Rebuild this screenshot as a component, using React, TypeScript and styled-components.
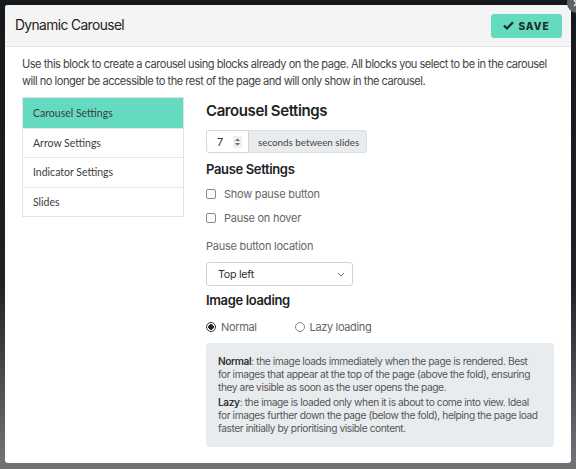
import React from "react";
import styled, { createGlobalStyle } from "styled-components";

const GlobalStyle = createGlobalStyle`
  html, body {
    margin: 0;
    padding: 0;
    background: #3b3e43;
    font-family: Inter, "Noto Sans", sans-serif;
    overflow: hidden;
  }
  * { box-sizing: border-box; }
`;

const tabs = ["Carousel Settings", "Arrow Settings", "Indicator Settings", "Slides"];

const App = () => {
  return (
    <>
      <GlobalStyle />
      <Backdrop>
        <Modal>
          <Header>
            <Title>Dynamic Carousel</Title>
            <SaveButton>
              <svg width="11" height="9" viewBox="0 0 11 9">
                <path d="M1 4.6 L4 7.4 L10 1.2" stroke="#1f2b2a" strokeWidth="2.2" fill="none" />
              </svg>
              SAVE
            </SaveButton>
          </Header>
          <Body>
            <Intro>
              Use this block to create a carousel using blocks already on the page. All blocks you select to be in the carousel
              <br />
              will no longer be accessible to the rest of the page and will only show in the carousel.
            </Intro>
            <Columns>
              <Sidebar>
                {tabs.map((t, i) => (
                  <Tab key={t} $active={i === 0}>
                    {t}
                  </Tab>
                ))}
              </Sidebar>
              <Content>
                <MainHeading>Carousel Settings</MainHeading>
                <InputGroup>
                  <NumberBox>
                    7
                    <Spinner>
                      <svg width="7" height="10" viewBox="0 0 7 10">
                        <path d="M1 4 L3.5 1.5 L6 4 Z M1 6 L3.5 8.5 L6 6 Z" fill="#666" />
                      </svg>
                    </Spinner>
                  </NumberBox>
                  <Addon>seconds between slides</Addon>
                </InputGroup>
                <SubHeading $top={8}>Pause Settings</SubHeading>
                <CheckRow>
                  <CheckBox />
                  Show pause button
                </CheckRow>
                <CheckRow>
                  <CheckBox />
                  Pause on hover
                </CheckRow>
                <FieldLabel>Pause button location</FieldLabel>
                <Select>
                  Top left
                  <svg width="8" height="5" viewBox="0 0 8 5">
                    <path d="M1 1 L4 4 L7 1" stroke="#777" strokeWidth="1" fill="none" />
                  </svg>
                </Select>
                <SubHeading $top={6}>Image loading</SubHeading>
                <RadioRow>
                  <RadioOption $gap={38}>
                    <Radio $checked />
                    Normal
                  </RadioOption>
                  <RadioOption>
                    <Radio />
                    Lazy loading
                  </RadioOption>
                </RadioRow>
                <InfoBox>
                  <InfoPara>
                    <b>Normal</b>: the image loads immediately when the page is rendered. Best
                    <br />
                    for images that appear at the top of the page (above the fold), ensuring
                    <br />
                    they are visible as soon as the user opens the page.
                  </InfoPara>
                  <InfoPara>
                    <b>Lazy</b>: the image is loaded only when it is about to come into view. Ideal
                    <br />
                    for images further down the page (below the fold), helping the page load
                    <br />
                    faster initially by prioritising visible content.
                  </InfoPara>
                </InfoBox>
              </Content>
            </Columns>
          </Body>
          <CloseButton>
            <svg width="8" height="8" viewBox="0 0 8 8">
              <path d="M1 1 L7 7 M7 1 L1 7" stroke="#e4e4e4" strokeWidth="1.6" />
            </svg>
          </CloseButton>
        </Modal>
      </Backdrop>
    </>
  );
};

export default App;

const Backdrop = styled.div`
  width: 576px;
  height: 469px;
  padding: 5px 4px 6px 5px;
  background: linear-gradient(#15181c 0%, #1d2024 60%, #6e7176 98%);
`;

const Modal = styled.div`
  position: relative;
  width: 566px;
  height: 458px;
  background: #fff;
  border-radius: 3px;
  display: flex;
  flex-direction: column;
`;

const Header = styled.div`
  flex-shrink: 0;
  height: 42px;
  background: #f4f4f4;
  border-bottom: 1px solid #e4e4e4;
  display: flex;
  align-items: center;
  justify-content: space-between;
  padding: 0 9px 0 10px;
  border-radius: 3px 3px 0 0;
`;

const Title = styled.div`
  font-size: 13.8px;
  color: #222;
  letter-spacing: -0.6px;
  margin-top: -1px;
`;

const SaveButton = styled.div`
  width: 71px;
  height: 24px;
  background: #62dbbf;
  border-radius: 3px;
  display: flex;
  align-items: center;
  justify-content: center;
  gap: 4px;
  font-size: 10px;
  font-weight: 800;
  letter-spacing: 1px;
  color: #1f2b2a;
`;

const Body = styled.div`
  padding: 9px 11px 0 17px;
`;

const Intro = styled.p`
  margin: 0;
  font-size: 11.1px;
  line-height: 17px;
  color: #444;
  letter-spacing: -0.5px;
  white-space: nowrap;
`;

const Columns = styled.div`
  display: flex;
  gap: 22px;
  margin-top: 7px;
`;

const Sidebar = styled.div`
  flex-shrink: 0;
  width: 162px;
  align-self: flex-start;
  border: 1px solid #e3e3e3;
`;

const Tab = styled.div<{ $active?: boolean }>`
  height: 29.5px;
  display: flex;
  align-items: center;
  padding-left: 10px;
  font-family: Lato, sans-serif;
  font-size: 10.5px;
  color: #3d3d3d;
  background: ${(p) => (p.$active ? "#64dbc1" : "#fff")};
  border-top: ${(p) => (p.$active ? "none" : "1px solid #e6e6e6")};
`;

const Content = styled.div`
  flex: 1;
  min-width: 0;
  padding-right: 11px;
`;

const MainHeading = styled.div`
  font-size: 15px;
  font-weight: 600;
  color: #222;
  margin-top: 4px;
  line-height: 20px;
  letter-spacing: -0.4px;
`;

const InputGroup = styled.div`
  display: flex;
  height: 23px;
  margin-top: 9px;
`;

const NumberBox = styled.div`
  width: 43px;
  border: 1px solid #d6d6d6;
  border-radius: 3px 0 0 3px;
  display: flex;
  align-items: center;
  justify-content: space-between;
  padding: 0 6px 0 10px;
  font-size: 11px;
  color: #333;
`;

const Spinner = styled.span`
  display: flex;
  width: 9px;
  height: 12px;
  background: #efefef;
  align-items: center;
  justify-content: center;
`;

const Addon = styled.div`
  width: 118px;
  background: #e9ecef;
  border: 1px solid #dde0e3;
  border-left: none;
  border-radius: 0 3px 3px 0;
  display: flex;
  align-items: center;
  padding-left: 9px;
  font-family: Lato, sans-serif;
  font-size: 9.8px;
  color: #444;
  white-space: nowrap;
`;

const SubHeading = styled.div<{ $top: number }>`
  font-size: 13px;
  font-weight: 600;
  color: #222;
  margin-top: ${(p) => p.$top}px;
  line-height: 17px;
  letter-spacing: -0.35px;
`;

const CheckRow = styled.div`
  display: flex;
  align-items: center;
  gap: 8px;
  font-size: 11px;
  letter-spacing: -0.25px;
  color: #666;
  height: 16px;
  margin-top: 8px;
`;

const CheckBox = styled.span`
  width: 10px;
  height: 10px;
  border: 1px solid #8a8a8a;
  border-radius: 2px;
`;

const FieldLabel = styled.div`
  font-size: 11px;
  letter-spacing: -0.25px;
  color: #666;
  margin-top: 13px;
  line-height: 14px;
`;

const Select = styled.div`
  width: 147px;
  height: 24px;
  border: 1px solid #d2d2d2;
  border-radius: 3px;
  margin-top: 9px;
  display: flex;
  align-items: center;
  justify-content: space-between;
  padding: 0 7px 0 11px;
  font-size: 10.8px;
  letter-spacing: -0.3px;
  color: #333;
`;

const RadioRow = styled.div`
  display: flex;
  margin-top: 10px;
  height: 16px;
`;

const RadioOption = styled.div<{ $gap?: number }>`
  display: flex;
  align-items: center;
  gap: 5px;
  font-size: 11px;
  letter-spacing: -0.35px;
  color: #666;
  margin-right: ${(p) => p.$gap ?? 0}px;
`;

const Radio = styled.span<{ $checked?: boolean }>`
  width: 10px;
  height: 10px;
  border-radius: 50%;
  border: 1px solid ${(p) => (p.$checked ? "#333" : "#888")};
  background: ${(p) => (p.$checked ? "radial-gradient(circle, #222 0 2.5px, #fff 3px)" : "#fff")};
`;

const InfoBox = styled.div`
  margin-top: 8px;
  width: 348px;
  background: #e9ecef;
  border-radius: 4px;
  padding: 12px 10px 12px 12px;
`;

const InfoPara = styled.p`
  margin: 0;
  font-size: 10.2px;
  line-height: 13px;
  color: #555;
  letter-spacing: -0.42px;
  white-space: nowrap;
  & + & {
    margin-top: 2px;
  }
  b {
    font-weight: 600;
    color: #333;
  }
`;

const CloseButton = styled.div`
  position: absolute;
  top: -12px;
  right: -16px;
  width: 20px;
  height: 20px;
  border-radius: 50%;
  background: #5f6266;
  display: flex;
  align-items: center;
  justify-content: center;
`;
